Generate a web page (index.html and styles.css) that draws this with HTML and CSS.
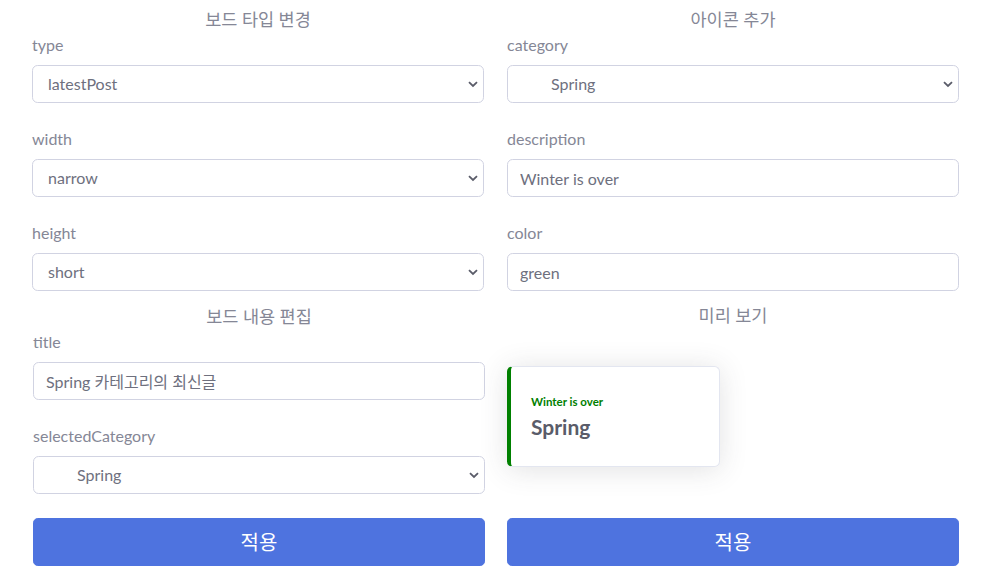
FILE: index.html
```html
<!DOCTYPE html>
<html lang="ko">
<head>
<meta charset="utf-8">
<title>보드 설정</title>
<link rel="stylesheet" href="styles.css">
</head>
<body>
<div class="page">
  <section class="col">
    <h6 class="section-title">보드 타입 변경</h6>
    <div class="field">
      <label class="label">type</label>
      <div class="select-wrap">
        <select class="control select"><option>latestPost</option></select>
        <svg class="chev" width="10" height="7" viewBox="0 0 10 7"><path d="M1 1.2 L5 5 L9 1.2" fill="none" stroke="#5a5c69" stroke-width="1.8"/></svg>
      </div>
    </div>
    <div class="field">
      <label class="label">width</label>
      <div class="select-wrap">
        <select class="control select"><option>narrow</option></select>
        <svg class="chev" width="10" height="7" viewBox="0 0 10 7"><path d="M1 1.2 L5 5 L9 1.2" fill="none" stroke="#5a5c69" stroke-width="1.8"/></svg>
      </div>
    </div>
    <div class="field field-last">
      <label class="label">height</label>
      <div class="select-wrap">
        <select class="control select"><option>short</option></select>
        <svg class="chev" width="10" height="7" viewBox="0 0 10 7"><path d="M1 1.2 L5 5 L9 1.2" fill="none" stroke="#5a5c69" stroke-width="1.8"/></svg>
      </div>
    </div>
  </section>

  <section class="col">
    <h6 class="section-title">아이콘 추가</h6>
    <div class="field">
      <label class="label">category</label>
      <div class="select-wrap">
        <select class="control select select-indent"><option>Spring</option></select>
        <svg class="chev" width="10" height="7" viewBox="0 0 10 7"><path d="M1 1.2 L5 5 L9 1.2" fill="none" stroke="#5a5c69" stroke-width="1.8"/></svg>
      </div>
    </div>
    <div class="field">
      <label class="label">description</label>
      <input class="control" type="text" value="Winter is over">
    </div>
    <div class="field field-last">
      <label class="label">color</label>
      <input class="control" type="text" value="green">
    </div>
  </section>

  <section class="col col-shift">
    <h6 class="section-title">보드 내용 편집</h6>
    <div class="field">
      <label class="label">title</label>
      <input class="control" type="text" value="Spring 카테고리의 최신글">
    </div>
    <div class="field">
      <label class="label">selectedCategory</label>
      <div class="select-wrap">
        <select class="control select select-indent"><option>Spring</option></select>
        <svg class="chev" width="10" height="7" viewBox="0 0 10 7"><path d="M1 1.2 L5 5 L9 1.2" fill="none" stroke="#5a5c69" stroke-width="1.8"/></svg>
      </div>
    </div>
    <button class="btn">적용</button>
  </section>

  <section class="col col-preview">
    <h6 class="section-title">미리 보기</h6>
    <div class="preview">
      <div class="card">
        <div class="card-sub">Winter is over</div>
        <div class="card-title">Spring</div>
      </div>
    </div>
    <button class="btn">적용</button>
  </section>
</div>
</body>
</html>
```
FILE: styles.css
```css
* { box-sizing: border-box; }
html, body { margin: 0; padding: 0; background: #fff; }
body {
  font-family: Lato, "Noto Sans CJK KR", sans-serif;
  font-size: 16px;
  line-height: 1.5;
  color: #858796;
}
.page {
  display: grid;
  grid-template-columns: 452px 452px;
  column-gap: 23px;
  padding: 8px 22px 0 32px;
}
.col { display: flex; flex-direction: column; }
.col-shift { padding-left: 1px; margin-right: -1px; }
.section-title {
  margin: 0 0 1px 0;
  font-size: 17.5px;
  font-weight: 400;
  line-height: 24px;
  text-align: center;
  color: #858796;
}
.field { display: flex; flex-direction: column; margin-bottom: 24px; }
.field-last { margin-bottom: 14px; }
.label { display: block; line-height: 24px; margin-bottom: 8px; }
.control {
  display: block;
  width: 100%;
  height: 38px;
  padding: 6px 12px;
  font-family: inherit;
  font-size: 16px;
  line-height: 24px;
  color: #6e707e;
  background: #fff;
  border: 1px solid #d1d3e2;
  border-radius: 5.6px;
  outline: none;
}
.select-wrap { position: relative; }
.select { appearance: none; -webkit-appearance: none; padding-left: 15px; }
.select-indent { padding-left: 43px; }
.chev { position: absolute; right: 6px; top: 16px; }
.btn {
  display: block;
  width: 100%;
  height: 48px;
  margin-top: 0;
  padding: 8px 16px;
  font-family: inherit;
  font-size: 20px;
  line-height: 30px;
  color: #fff;
  background: #4e73df;
  border: 1px solid #4e73df;
  border-radius: 4.8px;
}
.col-preview .section-title { margin-top: -1px; }
.preview { padding-top: 37px; padding-bottom: 51px; }
.card {
  width: 213px;
  height: 101px;
  padding: 27px 20px 0 20px;
  background: #fff;
  border: 1px solid #e3e6f0;
  border-left: 4px solid green;
  border-radius: 5.6px;
  box-shadow: 0 2.4px 28px 0 rgba(58, 59, 69, 0.15);
}
.card-sub {
  font-size: 11.5px;
  font-weight: 700;
  line-height: 16.8px;
  color: green;
  margin-bottom: 4px;
}
.card-title {
  font-size: 21px;
  font-weight: 700;
  line-height: 24px;
  color: #5a5c69;
}
```
